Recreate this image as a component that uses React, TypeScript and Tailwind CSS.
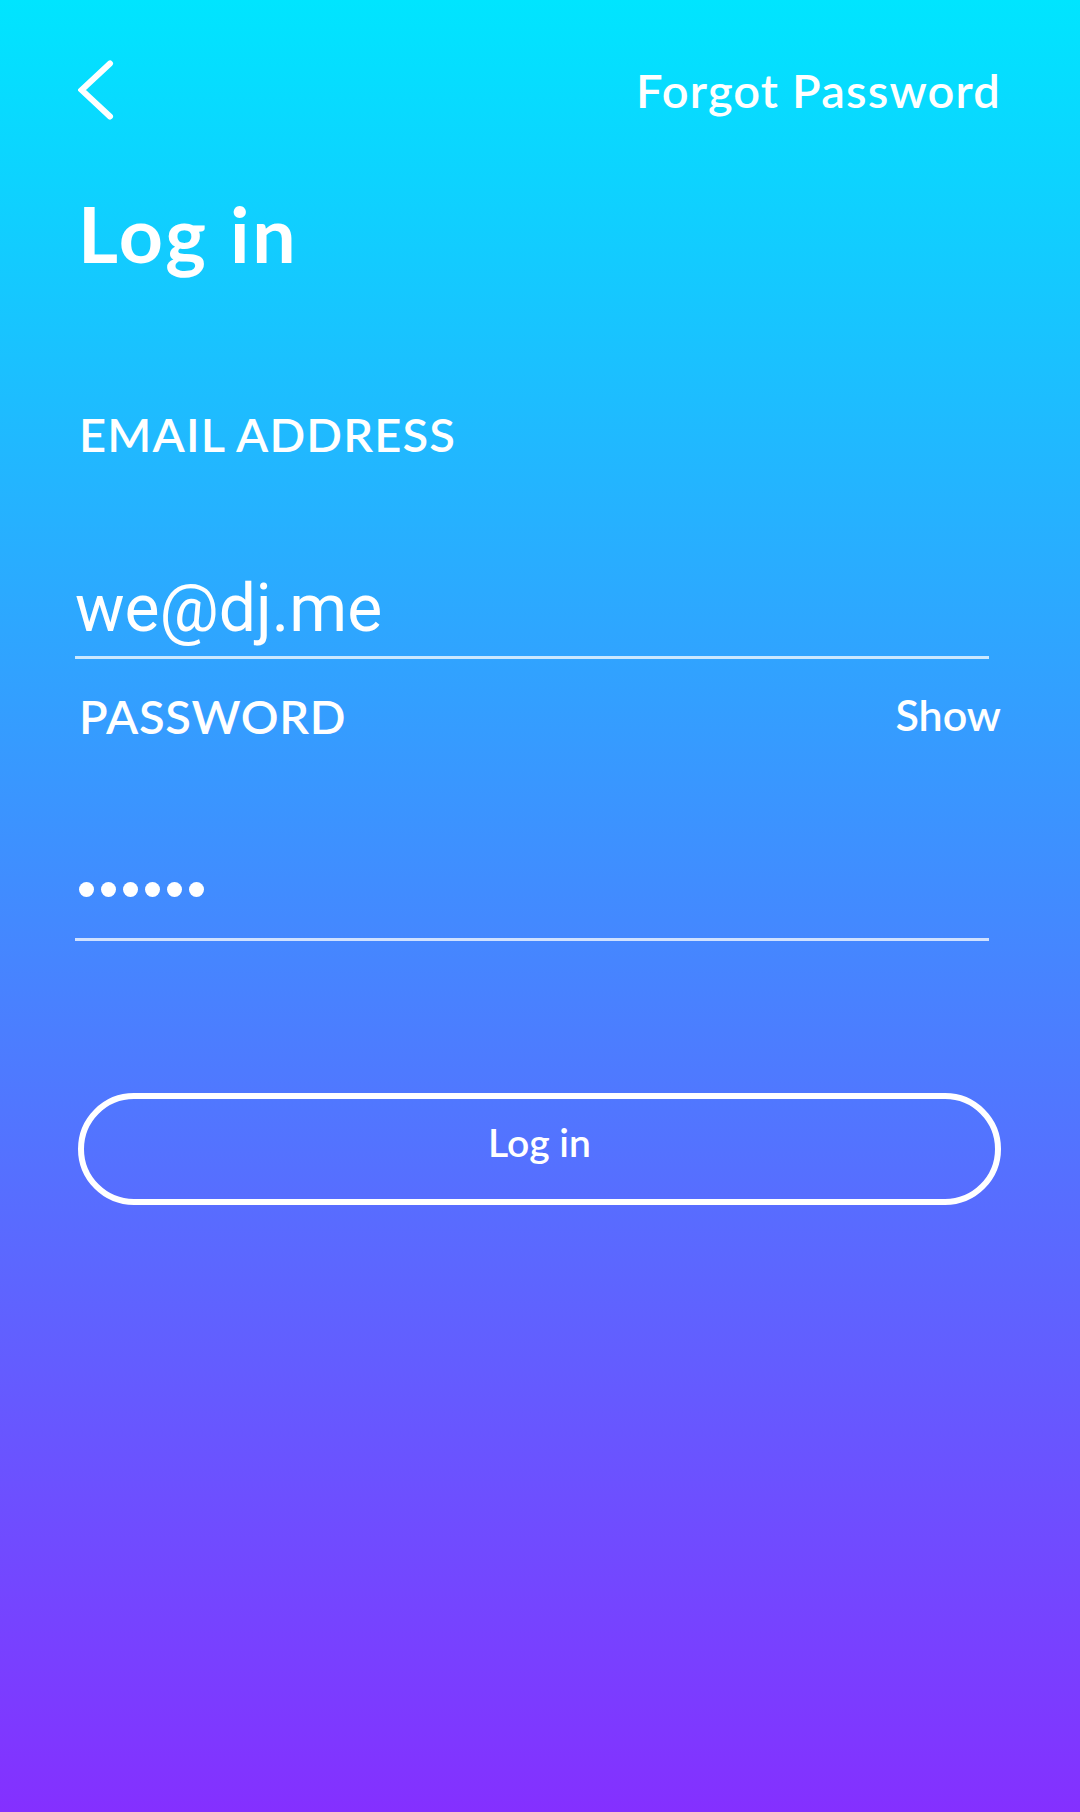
const dots = [0, 1, 2, 3, 4, 5];

const BackChevron = () => (
  <svg width="40" height="60" viewBox="0 0 40 60" fill="none">
    <path
      d="M32 3.5 L3.5 30 L32 56.5"
      stroke="white"
      strokeWidth="6"
      strokeLinecap="round"
      strokeLinejoin="miter"
    />
  </svg>
);

const App = () => {
  return (
    <div className="w-full h-[1812px] bg-linear-to-b/srgb from-[#00E5FF] to-[#8430FF] text-white font-['Lato','Noto_Sans',sans-serif] pl-[78px] pr-[79px] flex flex-col">
      {/* TOP BAR */}
      <div className="mt-[60px] h-[60px] flex items-center justify-between">
        <BackChevron />
        <span className="text-[47px] leading-none font-semibold tracking-[0.025em]">Forgot Password</span>
      </div>

      {/* TITLE */}
      <h1 className="mt-[75px] text-[77px] leading-none font-bold tracking-[0.035em]">Log in</h1>

      {/* EMAIL */}
      <div className="mt-[139px] pl-[1px] text-[47px] leading-none font-semibold tracking-[0.025em]">
        EMAIL ADDRESS
      </div>
      <div className="mt-[118px] w-[914px] -ml-[3px] border-b-[3px] border-white/75 pb-[14px]">
        <span className="block font-['Roboto',sans-serif] text-[66px] leading-none">we@dj.me</span>
      </div>

      {/* PASSWORD */}
      <div className="mt-[34px] pl-[1px] flex items-start justify-between">
        <span className="text-[47px] leading-none font-semibold tracking-[0.015em]">PASSWORD</span>
        <span className="text-[43px] leading-none font-semibold">Show</span>
      </div>
      <div className="mt-[142px] w-[914px] -ml-[3px] border-b-[3px] border-white/75 pb-[41px] flex gap-[7px] pl-[4px]">
        {dots.map((d) => (
          <span key={d} className="w-[15px] h-[15px] rounded-full bg-white" />
        ))}
      </div>

      {/* BUTTON */}
      <button className="mt-[152px] w-full h-[112px] rounded-full border-[6px] border-white flex items-center justify-center pb-[14px]">
        <span className="text-[39px] leading-none font-semibold">Log in</span>
      </button>
    </div>
  );
};

export default App;
